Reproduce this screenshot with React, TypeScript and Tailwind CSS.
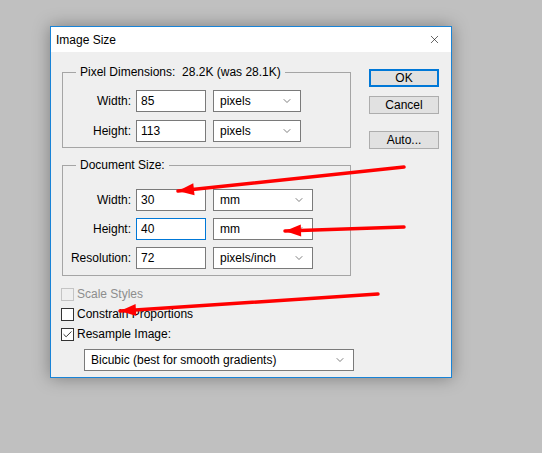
import { X, ChevronDown, Check } from 'lucide-react';

type Arrow = { x1: number; y1: number; x2: number; y2: number };

const arrows: Arrow[] = [
  { x1: 404, y1: 167, x2: 178, y2: 191 },
  { x1: 404, y1: 227, x2: 285, y2: 231 },
  { x1: 378, y1: 294, x2: 120, y2: 311 },
];

function headPoints(a: Arrow) {
  const dx = a.x2 - a.x1;
  const dy = a.y2 - a.y1;
  const len = Math.hypot(dx, dy);
  const ux = dx / len;
  const uy = dy / len;
  const bx = a.x2 - ux * 16;
  const by = a.y2 - uy * 16;
  const px = -uy * 6;
  const py = ux * 6;
  return `${a.x2},${a.y2} ${bx + px},${by + py} ${bx - px},${by - py}`;
}

function TextBox({ value, focused }: { value: string; focused?: boolean }) {
  return (
    <div
      className={
        focused
          ? 'w-[70px] h-[22px] bg-white border border-[#0078d7] flex items-center pl-[4px]'
          : 'w-[70px] h-[22px] bg-white border border-[#7a7a7a] flex items-center pl-[4px]'
      }
    >
      {value}
    </div>
  );
}

function Select({ value, width }: { value: string; width: string }) {
  return (
    <div className={`${width} h-[22px] bg-white border border-[#7a7a7a] flex items-center justify-between pl-[6px] pr-[7px]`}>
      <span>{value}</span>
      <ChevronDown className="w-[12px] h-[12px] text-[#555]" strokeWidth={1.5} />
    </div>
  );
}

function Row({ label, value, unit, focused, unitWidth }: { label: string; value: string; unit: string; focused?: boolean; unitWidth: string }) {
  return (
    <div className="flex items-center">
      <span className="w-[68px] text-right mr-[5px]">{label}</span>
      <TextBox value={value} focused={focused} />
      <div className="ml-[7px]">
        <Select value={unit} width={unitWidth} />
      </div>
    </div>
  );
}

function Checkbox({ label, checked, disabled }: { label: string; checked?: boolean; disabled?: boolean }) {
  return (
    <div className="h-[20px] flex items-center -ml-px">
      <div
        className={
          disabled
            ? 'w-[13px] h-[13px] border border-[#c4c4c4] bg-[#efefef]'
            : 'w-[13px] h-[13px] border border-[#333] bg-white flex items-center justify-center'
        }
      >
        {checked && <Check className="w-[11px] h-[11px] text-[#222]" strokeWidth={2} />}
      </div>
      <span className={disabled ? 'ml-[3px] text-[#8d8d8d]' : 'ml-[3px]'}>{label}</span>
    </div>
  );
}

export default function App() {
  return (
    <div className="relative w-[542px] h-[453px] bg-[#c0c0c0] pl-[50px] pt-[26px] font-['Liberation_Sans',Arial,sans-serif] text-[12px] text-black leading-[16px]">
      <div className="w-[402px] h-[352px] border border-[#1883d7] bg-[#efefef] shadow-[0_0_16px_rgba(0,0,0,0.35)]">
        <div className="h-[25px] bg-white flex items-center justify-between pl-[5px] pr-[10px]">
          <span>Image Size</span>
          <X className="w-[13px] h-[13px] text-black" strokeWidth={1.1} />
        </div>

        <div className="flex px-[11px]">
          <div className="w-[289px]">
            <fieldset className="mt-[12px] border border-[#a5a5a5]">
              <legend className="ml-[13px] px-[4px]">Pixel Dimensions:&nbsp;&nbsp;28.2K (was 28.1K)</legend>
              <div className="pt-[10px] pb-[5px] flex flex-col gap-[8px]">
                <Row label="Width:" value="85" unit="pixels" unitWidth="w-[88px]" />
                <Row label="Height:" value="113" unit="pixels" unitWidth="w-[88px]" />
              </div>
            </fieldset>

            <fieldset className="mt-[9px] border border-[#a5a5a5]">
              <legend className="ml-[13px] px-[4px]">Document Size:</legend>
              <div className="pt-[16px] pb-[6px] flex flex-col gap-[7px]">
                <Row label="Width:" value="30" unit="mm" unitWidth="w-[100px]" />
                <Row label="Height:" value="40" unit="mm" focused unitWidth="w-[100px]" />
                <Row label="Resolution:" value="72" unit="pixels/inch" unitWidth="w-[100px]" />
              </div>
            </fieldset>

            <div className="mt-[8px]">
              <Checkbox label="Scale Styles" disabled />
              <Checkbox label="Constrain Proportions" />
              <Checkbox label="Resample Image:" checked />
            </div>

            <div className="mt-[5px] ml-[22px]">
              <Select value="Bicubic (best for smooth gradients)" width="w-[270px]" />
            </div>
          </div>

          <div className="ml-[18px] pt-[17px] flex flex-col">
            <button className="w-[70px] h-[18px] bg-[#e1e1e1] border-2 border-[#0078d7] flex items-center justify-center">OK</button>
            <button className="mt-[9px] w-[70px] h-[18px] bg-[#e1e1e1] border border-[#adadad] flex items-center justify-center">Cancel</button>
            <button className="mt-[17px] w-[70px] h-[18px] bg-[#e1e1e1] border border-[#adadad] flex items-center justify-center">Auto...</button>
          </div>
        </div>
      </div>

      <svg className="absolute inset-0 pointer-events-none" width="542" height="453">
        {arrows.map((a, i) => (
          <g key={i}>
            <line x1={a.x1} y1={a.y1} x2={a.x2} y2={a.y2} stroke="#ff0000" strokeWidth="3.5" strokeLinecap="round" />
            <polygon points={headPoints(a)} fill="#ff0000" />
          </g>
        ))}
      </svg>
    </div>
  );
}
